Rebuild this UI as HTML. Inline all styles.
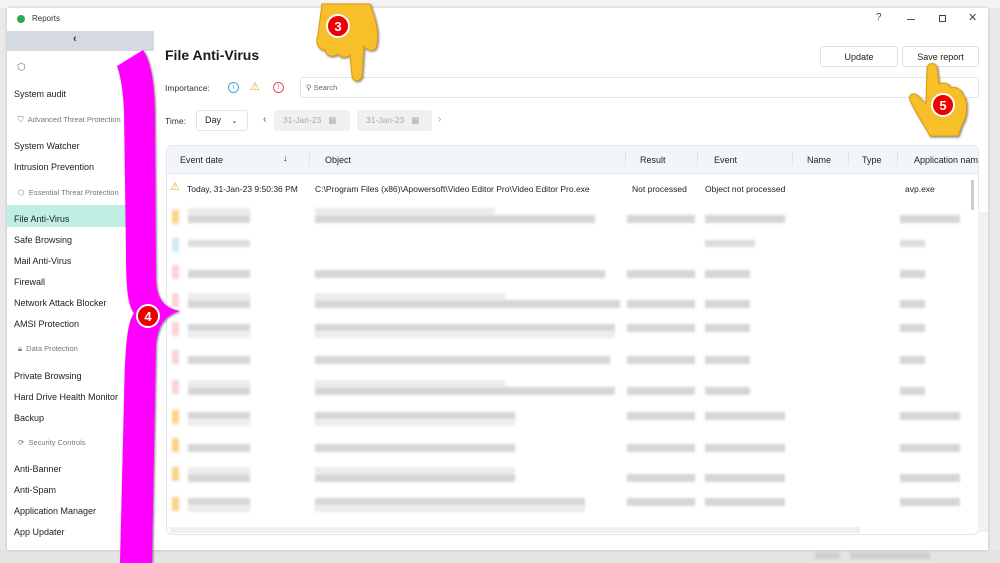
<!DOCTYPE html>
<html><head><meta charset="utf-8"><style>
*{margin:0;padding:0;box-sizing:border-box}
body{width:1000px;height:563px;overflow:hidden;background:#e9e9e9;font-family:"Liberation Sans",sans-serif;color:#222;position:relative}
.a{position:absolute}
.win{left:7px;top:8px;width:981px;height:542px;background:#fff;box-shadow:0 0 3px rgba(0,0,0,.2)}
.sb{font-size:9px;color:#222}
.sec{font-size:7.5px;color:#777}
.bar{position:absolute;height:8px;background:#d6d6d6;filter:blur(1.2px)}
.bl{position:absolute;height:7px;background:#ececec;filter:blur(1.2px)}
.hd{font-size:9px;color:#222}
.btn{border:1px solid #dde1e6;border-radius:3px;background:#fff;font-size:9px;text-align:center;line-height:20px}
</style></head><body>
<div class="a" style="left:0;top:0;width:1000px;height:8px;background:#f4f4f4"></div>
<div class="a" style="left:0;top:550px;width:1000px;height:13px;background:#e4e4e4"></div>
<div class="a win"></div>
<!-- title bar -->
<div class="a" style="left:17px;top:15px;width:8px;height:8px;border-radius:50%;background:#2fa84f"></div>
<div class="a" style="left:32px;top:14px;font-size:8px;color:#333">Reports</div>
<div class="a" style="left:876px;top:12px;font-size:10px;color:#444">?</div>
<div class="a" style="left:907px;top:19px;width:8px;height:1px;background:#555"></div>
<div class="a" style="left:939px;top:15px;width:7px;height:7px;border:1px solid #444"></div>
<div class="a" style="left:968px;top:11px;font-size:11px;color:#444">✕</div>
<!-- sidebar -->
<div class="a" style="left:7px;top:31px;width:147px;height:20px;background:#d5dae1"></div>
<div class="a" style="left:73px;top:33px;font-size:11px;color:#333;font-weight:bold">‹</div>
<div class="a" style="left:7px;top:205px;width:120px;height:22px;background:#bfeee5"></div>
<div class="a sec" style="left:17px;top:62px;font-size:10px">⬡</div>
<div class="a sb" style="left:14px;top:89px">System audit</div>
<div class="a sec" style="left:18px;top:115px">⛉ &nbsp;Advanced Threat Protection</div>
<div class="a sb" style="left:14px;top:141px">System Watcher</div>
<div class="a sb" style="left:14px;top:162px">Intrusion Prevention</div>
<div class="a sec" style="left:18px;top:188px">⬡ &nbsp;Essential Threat Protection</div>
<div class="a sb" style="left:14px;top:214px">File Anti-Virus</div>
<div class="a sb" style="left:14px;top:235px">Safe Browsing</div>
<div class="a sb" style="left:14px;top:256px">Mail Anti-Virus</div>
<div class="a sb" style="left:14px;top:277px">Firewall</div>
<div class="a sb" style="left:14px;top:298px">Network Attack Blocker</div>
<div class="a sb" style="left:14px;top:319px">AMSI Protection</div>
<div class="a sec" style="left:18px;top:344px">🔒︎ &nbsp;Data Protection</div>
<div class="a sb" style="left:14px;top:371px">Private Browsing</div>
<div class="a sb" style="left:14px;top:392px">Hard Drive Health Monitor</div>
<div class="a sb" style="left:14px;top:413px">Backup</div>
<div class="a sec" style="left:18px;top:438px">⟳ &nbsp;Security Controls</div>
<div class="a sb" style="left:14px;top:464px">Anti-Banner</div>
<div class="a sb" style="left:14px;top:485px">Anti-Spam</div>
<div class="a sb" style="left:14px;top:506px">Application Manager</div>
<div class="a sb" style="left:14px;top:527px">App Updater</div>
<!-- main header -->
<div class="a" style="left:165px;top:47px;font-size:14px;font-weight:bold;color:#1a1a1a">File Anti-Virus</div>
<div class="a btn" style="left:820px;top:46px;width:78px;height:21px">Update</div>
<div class="a btn" style="left:902px;top:46px;width:77px;height:21px">Save report</div>
<div class="a" style="left:165px;top:83px;font-size:8.5px;color:#333">Importance:</div>
<div class="a" style="left:228px;top:82px;width:11px;height:11px;border:1px solid #4aa8e0;border-radius:50%;font-size:7px;color:#4aa8e0;text-align:center;line-height:9px">i</div>
<div class="a" style="left:250px;top:80px;font-size:11px;color:#f0a020">⚠</div>
<div class="a" style="left:273px;top:82px;width:11px;height:11px;border:1px solid #e05050;border-radius:50%;font-size:7px;color:#e05050;text-align:center;line-height:9px">!</div>
<div class="a" style="left:300px;top:77px;width:679px;height:21px;border:1px solid #e2e5e9;border-radius:3px"></div>
<div class="a" style="left:306px;top:83px;font-size:7.5px;color:#666">⚲ Search</div>
<div class="a" style="left:165px;top:116px;font-size:8.5px;color:#333">Time:</div>
<div class="a" style="left:196px;top:110px;width:52px;height:21px;border:1px solid #e2e5e9;border-radius:3px;font-size:9px;line-height:19px;padding-left:8px">Day <span style="margin-left:8px;font-size:7px">⌄</span></div>
<div class="a" style="left:263px;top:114px;font-size:10px;color:#3a9;font-weight:bold">‹</div>
<div class="a" style="left:274px;top:110px;width:76px;height:21px;background:#eef0f2;border-radius:3px;font-size:8.5px;color:#aaa;line-height:21px;padding-left:9px">31-Jan-23 &nbsp;&nbsp;▦</div>
<div class="a" style="left:357px;top:110px;width:75px;height:21px;background:#eef0f2;border-radius:3px;font-size:8.5px;color:#aaa;line-height:21px;padding-left:9px">31-Jan-23 &nbsp;&nbsp;▦</div>
<div class="a" style="left:438px;top:114px;font-size:10px;color:#999">›</div>
<!-- table -->
<div class="a" style="left:166px;top:145px;width:813px;height:390px;border:1px solid #e3e7ec;border-radius:6px;overflow:hidden">
<div style="height:28px;background:#f3f6f9;border-bottom:1px solid #e3e7ec"></div>
</div>
<div class="a hd" style="left:180px;top:155px">Event date</div>
<div class="a hd" style="left:283px;top:153px;font-weight:bold">↓</div>
<div class="a" style="left:309px;top:152px;width:1px;height:14px;background:#e0e3e7"></div>
<div class="a hd" style="left:325px;top:155px">Object</div>
<div class="a" style="left:625px;top:152px;width:1px;height:14px;background:#e0e3e7"></div>
<div class="a hd" style="left:640px;top:155px">Result</div>
<div class="a" style="left:697px;top:152px;width:1px;height:14px;background:#e0e3e7"></div>
<div class="a hd" style="left:714px;top:155px">Event</div>
<div class="a" style="left:792px;top:152px;width:1px;height:14px;background:#e0e3e7"></div>
<div class="a hd" style="left:807px;top:155px">Name</div>
<div class="a" style="left:848px;top:152px;width:1px;height:14px;background:#e0e3e7"></div>
<div class="a hd" style="left:862px;top:155px">Type</div>
<div class="a" style="left:897px;top:152px;width:1px;height:14px;background:#e0e3e7"></div>
<div class="a hd" style="left:914px;top:155px;white-space:nowrap">Application nam</div>
<div class="a" style="left:170px;top:180px;font-size:11px;color:#f0a020">⚠</div>
<div class="a hd" style="left:187px;top:184px;font-size:8.5px">Today, 31-Jan-23 9:50:36 PM</div>
<div class="a hd" style="left:315px;top:184px;font-size:8.5px">C:\Program Files (x86)\Apowersoft\Video Editor Pro\Video Editor Pro.exe</div>
<div class="a hd" style="left:632px;top:184px;font-size:8.5px">Not processed</div>
<div class="a hd" style="left:705px;top:184px;font-size:8.5px">Object not processed</div>
<div class="a hd" style="left:905px;top:184px;font-size:8.5px">avp.exe</div>
<div class="a" style="left:971px;top:180px;width:3px;height:30px;background:#ccc"></div>
<div class="a" style="left:978px;top:212px;width:10px;height:320px;background:#f2f2f2"></div>
<div class="a" style="left:170px;top:527px;width:690px;height:6px;background:#eef0f2"></div>

<!-- blurred rows -->
<div class="a" style="left:0;top:0">
<div class="bar" style="left:172px;top:210px;width:7px;height:14px;background:#fcd48a"></div>
<div class="bl" style="left:188px;top:208px;width:62px"></div><div class="bar" style="left:188px;top:215px;width:62px"></div>
<div class="bl" style="left:315px;top:208px;width:180px"></div><div class="bar" style="left:315px;top:215px;width:280px"></div>
<div class="bar" style="left:627px;top:215px;width:68px"></div><div class="bar" style="left:705px;top:215px;width:80px"></div><div class="bar" style="left:900px;top:215px;width:60px"></div>

<div class="bar" style="left:172px;top:238px;width:7px;height:14px;background:#cfe9f7"></div>
<div class="bl" style="left:188px;top:240px;width:62px;background:#dcdcdc"></div>
<div class="bl" style="left:705px;top:240px;width:50px;background:#dcdcdc"></div><div class="bl" style="left:900px;top:240px;width:25px;background:#dcdcdc"></div>

<div class="bar" style="left:172px;top:265px;width:7px;height:14px;background:#fbd4d4"></div>
<div class="bar" style="left:188px;top:270px;width:62px"></div><div class="bar" style="left:315px;top:270px;width:290px"></div>
<div class="bar" style="left:627px;top:270px;width:68px"></div><div class="bar" style="left:705px;top:270px;width:45px"></div><div class="bar" style="left:900px;top:270px;width:25px"></div>

<div class="bar" style="left:172px;top:293px;width:7px;height:14px;background:#fbd4d4"></div>
<div class="bl" style="left:188px;top:293px;width:62px"></div><div class="bar" style="left:188px;top:300px;width:62px"></div>
<div class="bl" style="left:315px;top:293px;width:190px"></div><div class="bar" style="left:315px;top:300px;width:305px"></div>
<div class="bar" style="left:627px;top:300px;width:68px"></div><div class="bar" style="left:705px;top:300px;width:45px"></div><div class="bar" style="left:900px;top:300px;width:25px"></div>

<div class="bar" style="left:172px;top:322px;width:7px;height:14px;background:#fbd4d4"></div>
<div class="bar" style="left:188px;top:324px;width:62px"></div><div class="bl" style="left:188px;top:331px;width:62px"></div>
<div class="bar" style="left:315px;top:324px;width:300px"></div><div class="bl" style="left:315px;top:331px;width:300px"></div>
<div class="bar" style="left:627px;top:324px;width:68px"></div><div class="bar" style="left:705px;top:324px;width:45px"></div><div class="bar" style="left:900px;top:324px;width:25px"></div>

<div class="bar" style="left:172px;top:350px;width:7px;height:14px;background:#fbd4d4"></div>
<div class="bar" style="left:188px;top:356px;width:62px"></div><div class="bar" style="left:315px;top:356px;width:295px"></div>
<div class="bar" style="left:627px;top:356px;width:68px"></div><div class="bar" style="left:705px;top:356px;width:45px"></div><div class="bar" style="left:900px;top:356px;width:25px"></div>

<div class="bar" style="left:172px;top:380px;width:7px;height:14px;background:#fbd4d4"></div>
<div class="bl" style="left:188px;top:380px;width:62px"></div><div class="bar" style="left:188px;top:387px;width:62px"></div>
<div class="bl" style="left:315px;top:380px;width:190px"></div><div class="bar" style="left:315px;top:387px;width:300px"></div>
<div class="bar" style="left:627px;top:387px;width:68px"></div><div class="bar" style="left:705px;top:387px;width:45px"></div><div class="bar" style="left:900px;top:387px;width:25px"></div>

<div class="bar" style="left:172px;top:410px;width:7px;height:14px;background:#fcd48a"></div>
<div class="bar" style="left:188px;top:412px;width:62px"></div><div class="bl" style="left:188px;top:419px;width:62px"></div>
<div class="bar" style="left:315px;top:412px;width:200px"></div><div class="bl" style="left:315px;top:419px;width:200px"></div>
<div class="bar" style="left:627px;top:412px;width:68px"></div><div class="bar" style="left:705px;top:412px;width:80px"></div><div class="bar" style="left:900px;top:412px;width:60px"></div>

<div class="bar" style="left:172px;top:438px;width:7px;height:14px;background:#fcd48a"></div>
<div class="bar" style="left:188px;top:444px;width:62px"></div><div class="bar" style="left:315px;top:444px;width:200px"></div>
<div class="bar" style="left:627px;top:444px;width:68px"></div><div class="bar" style="left:705px;top:444px;width:80px"></div><div class="bar" style="left:900px;top:444px;width:60px"></div>

<div class="bar" style="left:172px;top:467px;width:7px;height:14px;background:#fcd48a"></div>
<div class="bl" style="left:188px;top:467px;width:62px"></div><div class="bar" style="left:188px;top:474px;width:62px"></div>
<div class="bl" style="left:315px;top:467px;width:200px"></div><div class="bar" style="left:315px;top:474px;width:200px"></div>
<div class="bar" style="left:627px;top:474px;width:68px"></div><div class="bar" style="left:705px;top:474px;width:80px"></div><div class="bar" style="left:900px;top:474px;width:60px"></div>

<div class="bar" style="left:172px;top:497px;width:7px;height:14px;background:#fcd48a"></div>
<div class="bar" style="left:188px;top:498px;width:62px"></div><div class="bl" style="left:188px;top:505px;width:62px"></div>
<div class="bar" style="left:315px;top:498px;width:270px"></div><div class="bl" style="left:315px;top:505px;width:270px"></div>
<div class="bar" style="left:627px;top:498px;width:68px"></div><div class="bar" style="left:705px;top:498px;width:80px"></div><div class="bar" style="left:900px;top:498px;width:60px"></div>
</div>
<div class="bar" style="left:815px;top:552px;width:25px;height:7px;background:#cfcfcf"></div>
<div class="bar" style="left:850px;top:552px;width:80px;height:7px;background:#cfcfcf"></div>

<!-- annotations -->
<svg class="a" style="left:0;top:0" width="1000" height="563" viewBox="0 0 1000 563">
<defs><filter id="sh"><feDropShadow dx="1" dy="1" stdDeviation="1" flood-opacity=".5"/></filter></defs>
<path filter="url(#sh)" fill="#ff00ff" d="M143,50 C150,60 155,80 155,120 L156,280 C157,300 165,308 180,311 C165,315 158,325 156,345 L152,563 L120,563 L124,400 C125,340 128,322 134,313 C128,305 126,290 126,250 L124,110 C123,88 120,74 117,66 Z"/>
<circle cx="148" cy="316" r="11" fill="#e00" stroke="#fff" stroke-width="2"/>
<text x="148" y="321" font-family="Liberation Sans" font-weight="bold" font-size="13" fill="#fff" text-anchor="middle">4</text>
<!-- hand 3 (pointing down) -->
<path filter="url(#sh)" fill="#f7c02a" stroke="#d89a10" stroke-width="1" d="M322,4 L370,4 C376,20 380,35 376,48 C372,52 366,50 364,46 L362,76 C361,82 353,83 352,76 L350,55 C346,58 340,58 338,54 C332,58 326,56 325,50 C318,50 315,42 318,35 Z"/>
<circle cx="338" cy="26" r="11" fill="#e00" stroke="#fff" stroke-width="2"/>
<text x="338" y="31" font-family="Liberation Sans" font-weight="bold" font-size="13" fill="#fff" text-anchor="middle">3</text>
<!-- hand 5 (pointing up) -->
<path filter="url(#sh)" fill="#f7c02a" stroke="#d89a10" stroke-width="1" d="M927,68 C928,62 936,62 937,68 L939,84 C944,82 950,84 951,88 C956,86 962,90 963,95 C968,100 968,115 962,125 L958,136 L930,136 C925,126 915,112 910,100 C908,94 914,92 918,96 L926,104 Z"/>
<circle cx="943" cy="105" r="11" fill="#e00" stroke="#fff" stroke-width="2"/>
<text x="943" y="110" font-family="Liberation Sans" font-weight="bold" font-size="13" fill="#fff" text-anchor="middle">5</text>
</svg>
</body></html>
